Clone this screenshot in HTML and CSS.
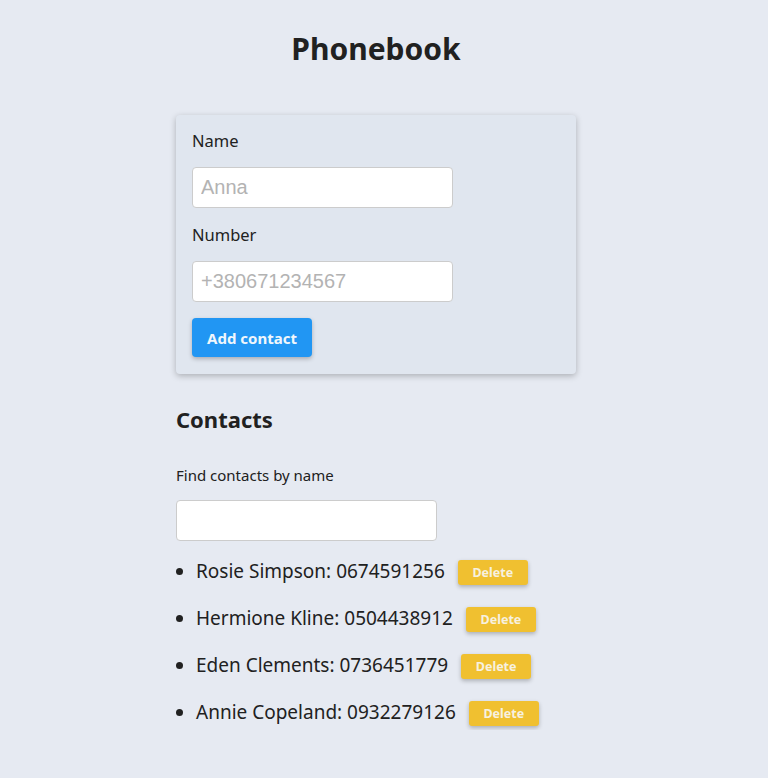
FILE: index.html
```html
<!DOCTYPE html>
<html lang="en">
<head>
<meta charset="utf-8">
<title>Phonebook</title>
<link rel="stylesheet" href="styles.css">
</head>
<body>
<div class="app">
  <h1 class="title">Phonebook</h1>
  <form class="card">
    <label class="field">
      <span class="label">Name</span>
      <input class="input" type="text" placeholder="Anna">
    </label>
    <label class="field">
      <span class="label">Number</span>
      <input class="input" type="tel" placeholder="+380671234567">
    </label>
    <button class="btn-add" type="button">Add contact</button>
  </form>
  <h2 class="subtitle">Contacts</h2>
  <label class="filter">
    <span class="filter-label">Find contacts by name</span>
    <input class="input" type="text">
  </label>
  <ul class="list">
    <li class="item"><span>Rosie Simpson: 0674591256</span><button class="btn-del" type="button">Delete</button></li>
    <li class="item"><span>Hermione Kline: 0504438912</span><button class="btn-del" type="button">Delete</button></li>
    <li class="item"><span>Eden Clements: 0736451779</span><button class="btn-del" type="button">Delete</button></li>
    <li class="item"><span>Annie Copeland: 0932279126</span><button class="btn-del" type="button">Delete</button></li>
  </ul>
</div>
</body>
</html>
```
FILE: styles.css
```css
* { box-sizing: border-box; }
html, body { margin: 0; padding: 0; }
body {
  background: #e6eaf2;
  font-family: "Noto Sans", "Open Sans", sans-serif;
  color: #212121;
}
.app {
  width: 400px;
  margin-left: 176px;
  padding-top: 27px;
  display: flex;
  flex-direction: column;
}
.title {
  margin: 0;
  text-align: center;
  font-size: 30px;
  line-height: 44px;
  font-weight: 700;
}
.card {
  margin-top: 44px;
  background: #e0e6ef;
  border-radius: 4px;
  box-shadow: 0 2px 6px rgba(0,0,0,0.25);
  padding: 14px 16px 17px;
  display: flex;
  flex-direction: column;
  align-items: flex-start;
}
.field {
  display: flex;
  flex-direction: column;
  align-items: flex-start;
  margin-bottom: 15px;
}
.label {
  font-size: 16.5px;
  line-height: 24px;
  margin-bottom: 14px;
}
.input {
  width: 261px;
  height: 41px;
  border: 1px solid #cccccc;
  border-radius: 4px;
  background: #fff;
  padding: 0 8px;
  font-family: "Liberation Sans", Arial, sans-serif;
  font-size: 20px;
  color: #222;
  outline: none;
}
.input::placeholder { color: #b3b3b3; }
.btn-add {
  margin-top: 1px;
  width: 120px;
  height: 39px;
  border: none;
  border-radius: 4px;
  background: #2196f3;
  color: #f0f6fc;
  font-family: inherit;
  font-weight: 700;
  font-size: 15px;
  box-shadow: 0 2px 4px rgba(0,0,0,0.25);
}
.subtitle {
  margin: 29px 0 0;
  font-size: 22px;
  line-height: 32px;
  font-weight: 700;
}
.filter {
  display: flex;
  flex-direction: column;
  align-items: flex-start;
  margin-top: 30px;
}
.filter-label {
  font-size: 15px;
  line-height: 20px;
  margin-bottom: 15px;
}
.list {
  margin: 13px 0 0;
  padding-left: 20px;
  display: flex;
  flex-direction: column;
  gap: 12px;
}
.item {
  font-size: 19px;
  line-height: 35px;
}
.btn-del {
  margin-left: 13px;
  width: 70px;
  height: 25px;
  vertical-align: middle;
  border: none;
  border-radius: 3px;
  background: #f0c030;
  color: #f7f1e0;
  font-family: inherit;
  font-weight: 700;
  font-size: 12.5px;
  box-shadow: 0 2px 4px rgba(0,0,0,0.25);
}
```
